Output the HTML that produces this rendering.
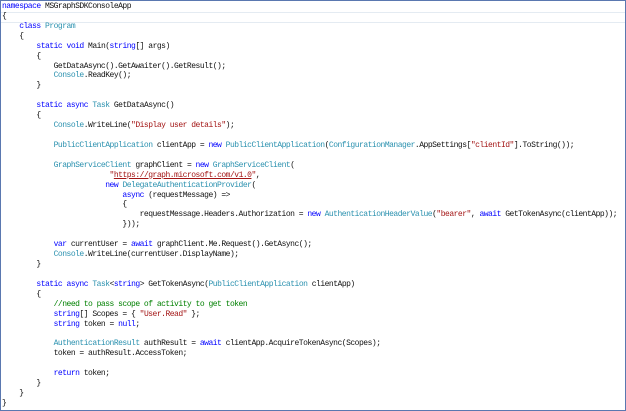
<!DOCTYPE html>
<html><head><meta charset="utf-8"><style>
html,body{margin:0;padding:0;background:#fff;}
#f{position:absolute;left:0;top:0;width:624px;height:409px;border:1px solid #5a78b0;background:#fff;overflow:hidden;}
#hl{position:absolute;left:0;top:11px;width:624px;height:9px;border-top:1px solid #e4ebf2;border-bottom:1px solid #e4ebf2;}
pre{position:absolute;left:1px;top:1px;margin:0;font-family:"Liberation Mono",monospace;font-size:8px;letter-spacing:-0.5px;line-height:9.925px;color:#111;}
.k{color:#0000ff}.t{color:#2b91af}.s{color:#a31515}.c{color:#008000}.u{color:#a31515;text-decoration:underline}
</style></head><body><div id="f"><div id="hl"></div><pre><span class="k">namespace</span> MSGraphSDKConsoleApp
{
    <span class="k">class</span> <span class="t">Program</span>
    {
        <span class="k">static</span> <span class="k">void</span> Main(<span class="k">string</span>[] args)
        {
            GetDataAsync().GetAwaiter().GetResult();
            <span class="t">Console</span>.ReadKey();
        }

        <span class="k">static</span> <span class="k">async</span> <span class="t">Task</span> GetDataAsync()
        {
            <span class="t">Console</span>.WriteLine(<span class="s">"Display user details"</span>);

            <span class="t">PublicClientApplication</span> clientApp = <span class="k">new</span> <span class="t">PublicClientApplication</span>(<span class="t">ConfigurationManager</span>.AppSettings[<span class="s">"clientId"</span>].ToString());

            <span class="t">GraphServiceClient</span> graphClient = <span class="k">new</span> <span class="t">GraphServiceClient</span>(
                         <span class="s">"<span class="u">https://graph.microsoft.com/v1.0</span>"</span>,
                        <span class="k">new</span> <span class="t">DelegateAuthenticationProvider</span>(
                            <span class="k">async</span> (requestMessage) =&gt;
                            {
                                requestMessage.Headers.Authorization = <span class="k">new</span> <span class="t">AuthenticationHeaderValue</span>(<span class="s">"bearer"</span>, <span class="k">await</span> GetTokenAsync(clientApp));
                            }));

            <span class="k">var</span> currentUser = <span class="k">await</span> graphClient.Me.Request().GetAsync();
            <span class="t">Console</span>.WriteLine(currentUser.DisplayName);
        }

        <span class="k">static</span> <span class="k">async</span> <span class="t">Task</span>&lt;<span class="k">string</span>&gt; GetTokenAsync(<span class="t">PublicClientApplication</span> clientApp)
        {
            <span class="c">//need to pass scope of activity to get token</span>
            <span class="k">string</span>[] Scopes = { <span class="s">"User.Read"</span> };
            <span class="k">string</span> token = <span class="k">null</span>;

            <span class="t">AuthenticationResult</span> authResult = <span class="k">await</span> clientApp.AcquireTokenAsync(Scopes);
            token = authResult.AccessToken;

            <span class="k">return</span> token;
        }
    }
}</pre></div></body></html>
